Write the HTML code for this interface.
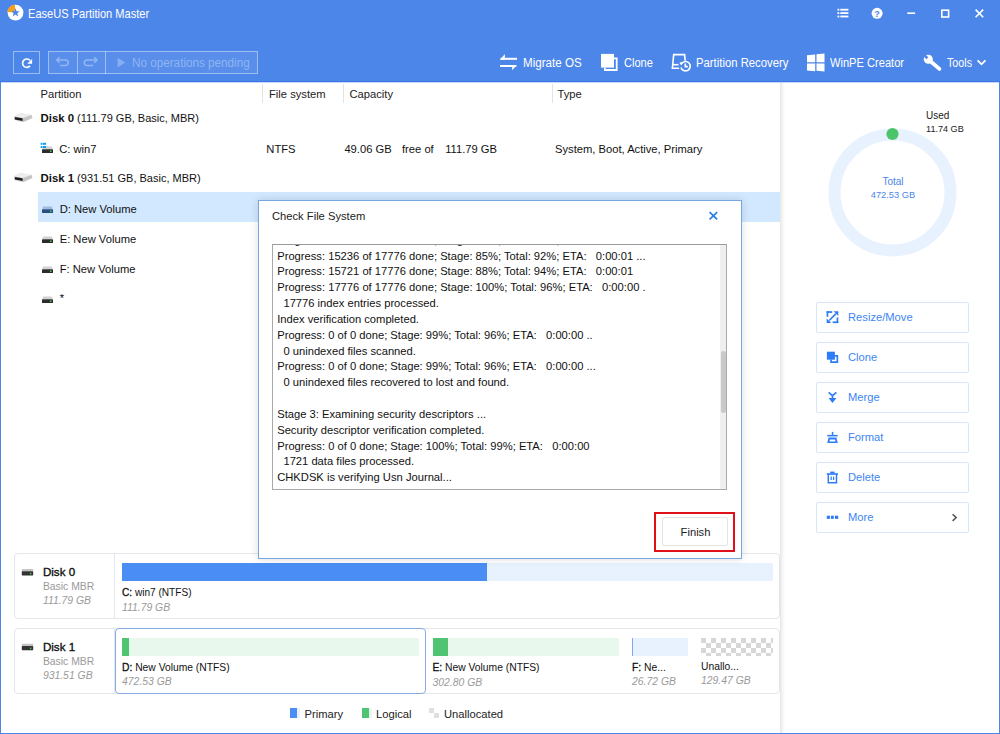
<!DOCTYPE html>
<html><head><meta charset="utf-8">
<style>
*{box-sizing:border-box;margin:0;padding:0}
html,body{width:1000px;height:734px;overflow:hidden;background:#fff}
body{position:relative;font-family:"Liberation Sans",sans-serif;color:#222}
.a{position:absolute}
.t{position:absolute;white-space:pre;line-height:16px;font-size:11.2px}
svg{position:absolute;overflow:visible}
</style></head><body>

<!-- HEADER -->
<div class="a" style="left:0;top:0;width:1000px;height:81px;background:#4d86e9"></div>
<div class="a" style="left:0;top:81px;width:1000px;height:1px;background:#3b78e6"></div>
<div class="a" style="left:0;top:82px;width:1000px;height:1px;background:#c4d7f7"></div>

<!-- window borders -->
<div class="a" style="left:0;top:82px;width:1px;height:652px;background:#4d86e9"></div>
<div class="a" style="left:999px;top:82px;width:1px;height:652px;background:#4d86e9"></div>
<div class="a" style="left:0;top:733px;width:1000px;height:1px;background:#4d86e9"></div>


<!-- logo -->
<svg style="left:0;top:0" width="40" height="30" viewBox="0 0 40 30">
  <circle cx="15.5" cy="12.6" r="7.9" fill="#fff"/>
  <path d="M15.5 12.6 L7.2 12.0 A8.2 8.2 0 0 1 14.8 4.6 Z" fill="#f5a01a"/>
  <path d="M15.5 8.2 L16.6 11.2 L19.8 11.3 L17.3 13.3 L18.2 16.4 L15.5 14.6 L12.8 16.4 L13.7 13.3 L11.2 11.3 L14.4 11.2 Z" fill="#4d86e9"/>
</svg>
<div class="t" style="left:28px;top:5.5px;color:#fff;font-size:12.4px;transform:scaleX(0.893);transform-origin:0 0">EaseUS Partition Master</div>

<!-- window controls -->
<svg style="left:0;top:0" width="1000" height="30">
  <g fill="#fff">
    <rect x="837.5" y="8.8" width="1.8" height="1.8"/><rect x="840.3" y="8.8" width="8.1" height="1.8"/>
    <rect x="837.5" y="12.2" width="1.8" height="1.8"/><rect x="840.3" y="12.2" width="8.1" height="1.8"/>
    <rect x="837.5" y="15.6" width="1.8" height="1.8"/><rect x="840.3" y="15.6" width="8.1" height="1.8"/>
    <circle cx="877.1" cy="13.3" r="5.5"/>
    <rect x="907.3" y="12.4" width="7.8" height="1.6"/>
  </g>
  <text x="877.1" y="16.6" text-anchor="middle" font-family="Liberation Sans" font-weight="bold" font-size="9" fill="#4d86e9">?</text>
  <rect x="941.8" y="10.2" width="6.8" height="6.8" fill="none" stroke="#fff" stroke-width="1.6"/>
  <path d="M975.6 9.6 L983.2 17.2 M983.2 9.6 L975.6 17.2" stroke="#fff" stroke-width="1.6"/>
</svg>

<!-- toolbar left -->
<div class="a" style="left:13px;top:51px;width:27px;height:23px;border:1px solid rgba(255,255,255,0.45)"></div>
<svg style="left:0;top:40px" width="60" height="40">
  <path d="M30.0 20.5 A4.2 4.2 0 1 0 30.0 25.9" fill="none" stroke="#fff" stroke-width="1.7"/>
  <path d="M27.2 23.8 L32.1 23.8 L32.1 18.9 Z" fill="#fff"/>
</svg>
<div class="a" style="left:48px;top:51px;width:210px;height:23px;border:1px solid rgba(255,255,255,0.42);background:rgba(255,255,255,0.07)"></div>
<div class="a" style="left:77px;top:51px;width:1px;height:23px;background:rgba(255,255,255,0.42)"></div>
<div class="a" style="left:105px;top:51px;width:1px;height:23px;background:rgba(255,255,255,0.42)"></div>
<svg style="left:0;top:40px" width="140" height="40">
  <g fill="none" stroke="#92b7f3" stroke-width="1.6">
    <path d="M56.8 20 H65.5 A2.75 2.75 0 0 1 65.5 25.5 H60.2"/>
    <path d="M59.6 17.2 L56.8 20 L59.6 22.8"/>
    <path d="M97 20 H87 A2.75 2.75 0 0 0 87 25.5 H93.3"/>
    <path d="M94.2 17.2 L97 20 L94.2 22.8"/>
  </g>
  <path d="M117.6 17.7 L125.2 22.6 L117.6 27.6 Z" fill="#92b7f3" opacity="0.8"/>
</svg>
<div class="t" style="left:132px;top:55px;color:#8fb5f3;font-size:12px;transform:scaleX(0.975);transform-origin:0 0">No operations pending</div>

<!-- nav items -->
<svg style="left:0;top:40px" width="1000" height="40">
  <g fill="#fff">
    <!-- migrate -->
    <rect x="500.5" y="17.8" width="16.5" height="2"/>
    <path d="M500 19.8 L504.9 13.9 L504.9 19.8 Z"/>
    <rect x="500" y="25" width="16.3" height="2"/>
    <path d="M516.7 25 L512.2 25 L512.2 30.2 Z"/>
    <!-- clone -->
    <rect x="601" y="13.9" width="13" height="13.7"/>
  </g>
  <path d="M604.9 27.6 V30.0 H616.7 V18.3 H614" fill="none" stroke="#fff" stroke-width="1.8"/>
  <!-- partition recovery -->
  <g fill="none" stroke="#fff" stroke-width="1.6">
    <path d="M679.2 28.2 H672.4 L673.7 14.6 H684.6 L685.2 20.6"/>
    <path d="M672.6 24.7 H678.6"/>
    <path d="M681.65 23.5 A4.7 4.7 0 1 1 680.96 27.42"/>
    <path d="M685.3 23.4 V26.6 H687.8"/>
  </g>
  <path d="M679.3 22.4 L683.4 22.0 L681.2 25.6 Z" fill="#fff"/>
  <!-- winpe -->
  <g fill="#fff">
    <path d="M807 15.2 L815.2 14.4 V22.3 H807 Z"/>
    <path d="M816.5 14.2 L824.5 13.6 V22.3 H816.5 Z"/>
    <path d="M807 23.4 H815.2 V31.2 L807 30.4 Z"/>
    <path d="M816.5 23.4 H824.5 V31.4 L816.5 30.8 Z"/>
  </g>
  <!-- tools wrench -->
  <path d="M930.2 21 L939.4 28.9" stroke="#fff" stroke-width="3.8" stroke-linecap="round"/>
  <circle cx="928.3" cy="19.2" r="4.5" fill="#fff"/>
  <path d="M925.18 14.2 L928.3 17.32 L926.42 19.2 L923.3 16.08 Z" fill="#4d86e9"/>
  <path d="M977.6 20.4 L981.5 24.3 L985.4 20.4" fill="none" stroke="#fff" stroke-width="1.8"/>
</svg>
<div class="t" style="left:523px;top:55px;color:#fff;font-size:12px;transform:scaleX(0.967);transform-origin:0 0">Migrate OS</div>
<div class="t" style="left:623.5px;top:55px;color:#fff;font-size:12px;transform:scaleX(0.92);transform-origin:0 0">Clone</div>
<div class="t" style="left:695.5px;top:55px;color:#fff;font-size:12px;transform:scaleX(0.943);transform-origin:0 0">Partition Recovery</div>
<div class="t" style="left:830px;top:55px;color:#fff;font-size:12px;transform:scaleX(0.925);transform-origin:0 0">WinPE Creator</div>
<div class="t" style="left:947px;top:55px;color:#fff;font-size:12px;transform:scaleX(0.893);transform-origin:0 0">Tools</div>


<!-- TABLE HEADER -->
<div class="t" style="left:40.5px;top:86px;font-size:11.2px;color:#222">Partition</div>
<div class="t" style="left:269px;top:86px;font-size:11.2px;color:#222">File system</div>
<div class="t" style="left:349.5px;top:86px;font-size:11.2px;color:#222">Capacity</div>
<div class="t" style="left:557.5px;top:86px;font-size:11.2px;color:#222">Type</div>
<div class="a" style="left:262px;top:84px;width:1px;height:19px;background:#e3e3e3"></div>
<div class="a" style="left:343px;top:84px;width:1px;height:19px;background:#e3e3e3"></div>
<div class="a" style="left:552px;top:84px;width:1px;height:19px;background:#e3e3e3"></div>

<!-- selected row -->
<div class="a" style="left:38px;top:192px;width:742px;height:30px;background:#d2e8ff"></div>

<!-- disk rows -->
<svg style="left:0;top:100px" width="60" height="220">
  <defs>
    <linearGradient id="dtop" x1="0" y1="0" x2="0" y2="1"><stop offset="0" stop-color="#e9e9e9"/><stop offset="1" stop-color="#bdbdbd"/></linearGradient>
  </defs>
  <g id="disk">
    <path d="M14.2 16.3 L19.8 13.0 L31.6 14.9 L32.4 17.9 L22.8 22.2 L14.4 20.0 Z" fill="#d6d6d6"/>
    <path d="M14.4 16.3 L19.8 13.0 L31.6 14.9 L22.9 18.1 Z" fill="#eeeeee"/>
    <path d="M22.9 18.1 L31.6 14.9 L32.4 17.9 L22.8 22.2 Z" fill="#c6c6c6"/>
    <path d="M14.8 16.9 L22.6 18.3 L22.6 21.1 L14.8 19.6 Z" fill="#1e1e1e"/>
  </g>
  <use href="#disk" y="60"/>
</svg>
<div class="t" style="left:40.5px;top:110px;font-size:11px;color:#111"><b style="font-size:11.4px">Disk 0</b> (111.79 GB, Basic, MBR)</div>
<div class="t" style="left:40.5px;top:170px;font-size:11px;color:#111"><b style="font-size:11.4px">Disk 1</b> (931.51 GB, Basic, MBR)</div>

<!-- partition icons -->
<svg style="left:0;top:130px" width="60" height="190">
  <g id="pdrv">
    <path d="M43.2 16.6 H51.8 L52.8 19.3 H42.2 Z" fill="#d2d2d2"/>
    <rect x="42" y="19.2" width="11" height="3.9" rx="0.6" fill="#2c2c2c"/>
    <rect x="50" y="20.5" width="1.5" height="1.5" fill="#3fd14a"/>
  </g>
  <g fill="#0aa0f0">
    <rect x="40.7" y="12.8" width="1.6" height="2"/><rect x="42.8" y="12.8" width="3.3" height="2"/>
    <rect x="40.7" y="16" width="1.6" height="2"/><rect x="42.8" y="16" width="3.3" height="2"/>
  </g>
  <g transform="translate(0,60)">
    <path d="M43.2 16.6 H51.8 L52.8 19.3 H42.2 Z" fill="#9fbbe0"/>
    <rect x="42" y="19.2" width="11" height="3.9" rx="0.6" fill="#2d4f80"/>
    <rect x="50" y="20.5" width="1.5" height="1.5" fill="#3fd14a"/>
  </g>
  <use href="#pdrv" y="90"/>
  <use href="#pdrv" y="120"/>
  <use href="#pdrv" y="150"/>
</svg>
<div class="t" style="left:59.2px;top:140.5px;font-size:11.2px;color:#111">C: win7</div>
<div class="t" style="left:266.3px;top:140.5px;font-size:11.2px;color:#111">NTFS</div>
<div class="t" style="left:344.4px;top:140.5px;font-size:11.2px;color:#111">49.06 GB</div>
<div class="t" style="left:402px;top:140.5px;font-size:11.2px;color:#111">free of</div>
<div class="t" style="left:445.2px;top:140.5px;font-size:11.2px;color:#111">111.79 GB</div>
<div class="t" style="left:555px;top:140.5px;font-size:11.2px;color:#111">System, Boot, Active, Primary</div>
<div class="t" style="left:59.7px;top:200.5px;font-size:11.2px;color:#111">D: New Volume</div>
<div class="t" style="left:59.7px;top:230.5px;font-size:11.2px;color:#111">E: New Volume</div>
<div class="t" style="left:59.7px;top:260.5px;font-size:11.2px;color:#111">F: New Volume</div>
<div class="t" style="left:59.7px;top:290px;font-size:11.2px;color:#111">*</div>

<!-- right panel divider shadow -->
<div class="a" style="left:780px;top:83px;width:5px;height:650px;background:linear-gradient(to right,#e4e4e4,#f3f3f3 40%,#fff)"></div>



<!-- DISK MAP -->
<div class="a" style="left:14px;top:553px;width:766px;height:66px;border:1px solid #e3e6ea;border-radius:4px"></div>
<div class="a" style="left:114px;top:554px;width:1px;height:64px;background:#e3e6ea"></div>
<div class="a" style="left:14px;top:628px;width:766px;height:66px;border:1px solid #e3e6ea;border-radius:4px"></div>
<div class="a" style="left:114px;top:629px;width:1px;height:64px;background:#e3e6ea"></div>
<div class="a" style="left:115px;top:628px;width:311px;height:66px;border:1px solid #88abe6;border-radius:4px;background:#fff"></div>

<svg style="left:0;top:540px" width="60" height="120">
  <g id="mdrv">
    <rect x="21.8" y="29" width="11.4" height="2.6" fill="#c4c4c4" rx="0.8"/>
    <rect x="21.8" y="31.3" width="11.4" height="4.1" fill="#333" rx="0.6"/>
    <rect x="30" y="32.8" width="1.4" height="1.4" fill="#3fd14a"/>
  </g>
  <use href="#mdrv" y="74.8"/>
</svg>
<div class="t" style="left:42.9px;top:564px;font-size:11.6px;color:#111;-webkit-text-stroke:0.35px #111">Disk 0</div>
<div class="t" style="left:42.9px;top:578.6px;font-size:10.4px;color:#9a9a9a">Basic MBR</div>
<div class="t" style="left:42.9px;top:592.8px;font-size:10.4px;color:#9a9a9a;font-style:italic">111.79 GB</div>
<div class="t" style="left:42.9px;top:639px;font-size:11.6px;color:#111;-webkit-text-stroke:0.35px #111">Disk 1</div>
<div class="t" style="left:42.9px;top:653.6px;font-size:10.4px;color:#9a9a9a">Basic MBR</div>
<div class="t" style="left:42.9px;top:667.6px;font-size:10.4px;color:#9a9a9a;font-style:italic">931.51 GB</div>

<!-- disk0 bar -->
<div class="a" style="left:122px;top:563px;width:651px;height:18px;background:#e8f2fe"></div>
<div class="a" style="left:122px;top:563px;width:365px;height:18px;background:#4a8ef5"></div>
<div class="t" style="left:122px;top:585px;font-size:10.1px;color:#111"><span style="-webkit-text-stroke:0.3px #111">C:</span> win7 (NTFS)</div>
<div class="t" style="left:122px;top:599.5px;font-size:10.4px;color:#9a9a9a;font-style:italic">111.79 GB</div>

<!-- disk1 bars -->
<div class="a" style="left:122px;top:638px;width:297px;height:18px;background:#e9f8ec"></div>
<div class="a" style="left:122px;top:638px;width:7px;height:18px;background:#50c472"></div>
<div class="t" style="left:122px;top:660px;font-size:10.3px;color:#111"><span style="-webkit-text-stroke:0.3px #111">D:</span> New Volume (NTFS)</div>
<div class="t" style="left:122px;top:674.3px;font-size:10.4px;color:#9a9a9a;font-style:italic">472.53 GB</div>

<div class="a" style="left:432.5px;top:638px;width:186.5px;height:18px;background:#e9f8ec"></div>
<div class="a" style="left:432.5px;top:638px;width:15.3px;height:18px;background:#50c472"></div>
<div class="t" style="left:432.5px;top:659.5px;font-size:10.3px;color:#111"><span style="-webkit-text-stroke:0.3px #111">E:</span> New Volume (NTFS)</div>
<div class="t" style="left:432.5px;top:674.5px;font-size:10.4px;color:#9a9a9a;font-style:italic">302.80 GB</div>

<div class="a" style="left:632px;top:638px;width:55.5px;height:18px;background:#e8f2fe;border-left:1px solid #79aaf2"></div>
<div class="t" style="left:632px;top:660px;font-size:10.3px;color:#111"><span style="-webkit-text-stroke:0.3px #111">F:</span> Ne...</div>
<div class="t" style="left:632px;top:674px;font-size:10.4px;color:#9a9a9a;font-style:italic">26.72 GB</div>

<div class="a" style="left:701px;top:638px;width:71.5px;height:17.5px;background:conic-gradient(#fff 25%,#d7d7d7 0 50%,#fff 0 75%,#d7d7d7 0);background-size:10px 10px"></div>
<div class="t" style="left:701px;top:659px;font-size:10.3px;color:#111">Unallo...</div>
<div class="t" style="left:701px;top:673px;font-size:10.4px;color:#9a9a9a;font-style:italic">129.47 GB</div>

<!-- LEGEND -->
<div class="a" style="left:290px;top:708px;width:6.5px;height:10px;background:#4a8ef5"></div>
<div class="a" style="left:296.5px;top:708px;width:3.5px;height:10px;background:#e8f2fe"></div>
<div class="t" style="left:304.5px;top:706px;font-size:11.2px;color:#222">Primary</div>
<div class="a" style="left:362px;top:708px;width:6.5px;height:10px;background:#50c472"></div>
<div class="a" style="left:368.5px;top:708px;width:3.5px;height:10px;background:#e9f8ec"></div>
<div class="t" style="left:376px;top:706px;font-size:11.2px;color:#222">Logical</div>
<div class="a" style="left:429px;top:708px;width:5px;height:5px;background:#e0e0e0"></div>
<div class="a" style="left:434px;top:713px;width:5px;height:5px;background:#e0e0e0"></div>
<div class="t" style="left:444px;top:706px;font-size:11.2px;color:#222">Unallocated</div>

<!-- DIALOG -->
<div class="a" style="left:258px;top:200px;width:484px;height:359px;background:#fff;border:1px solid #76a7df;box-shadow:0 0 8px rgba(0,0,0,0.14)"></div>
<div class="t" style="left:272px;top:208px;font-size:11.2px;color:#222">Check File System</div>
<svg style="left:0;top:0" width="1000" height="300">
  <path d="M709.6 212.2 L717.2 219.3 M717.2 212.2 L709.6 219.3" stroke="#2b7de0" stroke-width="1.7"/>
</svg>
<div class="a" style="left:272px;top:244px;width:455px;height:246px;border:1px solid #a9a9a9;border-top-color:#9a9a9a;overflow:hidden">
  <div class="a" style="left:4.2px;top:-12.2px;font-size:11.2px;line-height:15.83px;white-space:pre;color:#111">Progress: 14810 of 17776 done; Stage: 83%; Total: 91%; ETA:   0:00:01 ..
Progress: 15236 of 17776 done; Stage: 85%; Total: 92%; ETA:   0:00:01 ...
Progress: 15721 of 17776 done; Stage: 88%; Total: 94%; ETA:   0:00:01
Progress: 17776 of 17776 done; Stage: 100%; Total: 96%; ETA:   0:00:00 .
  17776 index entries processed.
Index verification completed.
Progress: 0 of 0 done; Stage: 99%; Total: 96%; ETA:   0:00:00 ..
  0 unindexed files scanned.
Progress: 0 of 0 done; Stage: 99%; Total: 96%; ETA:   0:00:00 ...
  0 unindexed files recovered to lost and found.

Stage 3: Examining security descriptors ...
Security descriptor verification completed.
Progress: 0 of 0 done; Stage: 100%; Total: 99%; ETA:   0:00:00
  1721 data files processed.
CHKDSK is verifying Usn Journal...</div>
  <div class="a" style="left:447px;top:0;width:7px;height:244px;background:#efefef"></div>
  <div class="a" style="left:448px;top:106px;width:5px;height:62px;background:#c9c9c9;border-radius:3px"></div>
</div>
<div class="a" style="left:654px;top:512px;width:81px;height:40px;border:2px solid #e2101b"></div>
<div class="a" style="left:662px;top:517px;width:66px;height:29px;border:1px solid #e4e4e4;border-radius:2px;background:#fff"></div>
<div class="t" style="left:680.6px;top:524px;font-size:11.2px;color:#222">Finish</div>


<!-- RIGHT PANEL -->
<svg style="left:780px;top:82px" width="220" height="200">
  <circle cx="112.5" cy="110.4" r="58" fill="none" stroke="#e8f2fe" stroke-width="12"/>
  <circle cx="112.5" cy="52" r="6.1" fill="#4cc46a"/>
</svg>
<div class="t" style="left:926px;top:107.5px;font-size:10px;color:#222">Used</div>
<div class="t" style="left:926px;top:120.5px;font-size:9.1px;color:#222">11.74 GB</div>
<div class="t" style="left:843px;top:174px;width:100px;text-align:center;font-size:10px;color:#4a86e8">Total</div>
<div class="t" style="left:843px;top:187px;width:100px;text-align:center;font-size:9.3px;color:#4a86e8">472.53 GB</div>

<div class="a" style="left:816px;top:302px;width:153px;height:31px;border:1px solid #d8e6fb;border-radius:2px"></div>
<div class="a" style="left:816px;top:342px;width:153px;height:31px;border:1px solid #d8e6fb;border-radius:2px"></div>
<div class="a" style="left:816px;top:382px;width:153px;height:31px;border:1px solid #d8e6fb;border-radius:2px"></div>
<div class="a" style="left:816px;top:422px;width:153px;height:31px;border:1px solid #d8e6fb;border-radius:2px"></div>
<div class="a" style="left:816px;top:462px;width:153px;height:31px;border:1px solid #d8e6fb;border-radius:2px"></div>
<div class="a" style="left:816px;top:502px;width:153px;height:31px;border:1px solid #d8e6fb;border-radius:2px"></div>
<div class="t" style="left:848px;top:309px;font-size:11.2px;color:#3d86f4">Resize/Move</div>
<div class="t" style="left:848px;top:349.0px;font-size:11.2px;color:#3d86f4">Clone</div>
<div class="t" style="left:848px;top:389.0px;font-size:11.2px;color:#3d86f4">Merge</div>
<div class="t" style="left:848px;top:429.0px;font-size:11.2px;color:#3d86f4">Format</div>
<div class="t" style="left:848px;top:469.0px;font-size:11.2px;color:#3d86f4">Delete</div>
<div class="t" style="left:848px;top:509.0px;font-size:11.2px;color:#3d86f4">More</div>
<svg style="left:0;top:0" width="1000" height="734">
  <g fill="none" stroke="#2b7cf6" stroke-width="1.6">
    <!-- resize -->
    <path d="M829.2 320.5 L835.8 313.9"/>
  </g>
  <g fill="#2b7cf6">
    <rect x="826.6" y="311.2" width="5.6" height="1.7"/>
    <rect x="826.6" y="311.2" width="1.7" height="5.6"/>
    <rect x="836.6" y="317.4" width="1.7" height="5.7"/>
    <rect x="832.6" y="321.4" width="5.7" height="1.7"/>
    <path d="M833.6 311.2 H838.3 V315.9 Z"/>
    <path d="M826.6 318.4 V323.1 H831.3 Z"/>
    <!-- clone -->
    <rect x="826.9" y="351.7" width="8" height="8"/>
  </g>
  <path d="M834.9 355.85 H837.35 V362.05 H831.05 V359.6" fill="none" stroke="#2b7cf6" stroke-width="1.7"/>
  <!-- merge -->
  <g fill="none" stroke="#2b7cf6" stroke-width="1.6">
    <path d="M828.6 392.3 L832.5 395.6 L836.4 392.3"/>
    <path d="M832.5 395.2 V398.6"/>
  </g>
  <path d="M828.6 397.9 H836.4 L832.5 402.9 Z" fill="#2b7cf6"/>
  <!-- format -->
  <g fill="#2b7cf6">
    <rect x="831.8" y="431.9" width="1.5" height="3"/>
    <path d="M827.3 434.9 H837.7 V436.4 H827.3 Z"/>
    <rect x="828.2" y="436.4" width="8.6" height="1.4" fill="#a9c9fb"/>
    <path fill-rule="evenodd" d="M828.6 437.8 H836.4 L837.8 443.1 H827.2 Z M829.9 439.4 H835.1 L835.6 441.6 H829.4 Z"/>
  </g>
  <g transform="translate(0,0.6)"><!-- delete -->
  <g fill="none" stroke="#2b7cf6" stroke-width="1.5">
    <path d="M828.3 473.6 V482.1 H836.5 V473.6"/>
  </g>
  <g fill="#2b7cf6">
    <rect x="826.8" y="472.6" width="11.2" height="1.6"/>
    <rect x="830.2" y="471" width="4.4" height="1.8"/>
    <rect x="830.6" y="476" width="1.2" height="3.4"/>
    <rect x="833" y="476" width="1.2" height="3.4"/>
    </g></g><g fill="#2b7cf6">
    <!-- more -->
    <rect x="826.8" y="515.7" width="3.1" height="3.2"/>
    <rect x="830.9" y="515.7" width="2.9" height="3.2"/>
    <rect x="835.0" y="515.7" width="3.2" height="3.2"/>
  </g>
  <path d="M952.6 514.3 L956.2 517.6 L952.6 520.9" fill="none" stroke="#555" stroke-width="1.5"/>
</svg>

</body></html>
